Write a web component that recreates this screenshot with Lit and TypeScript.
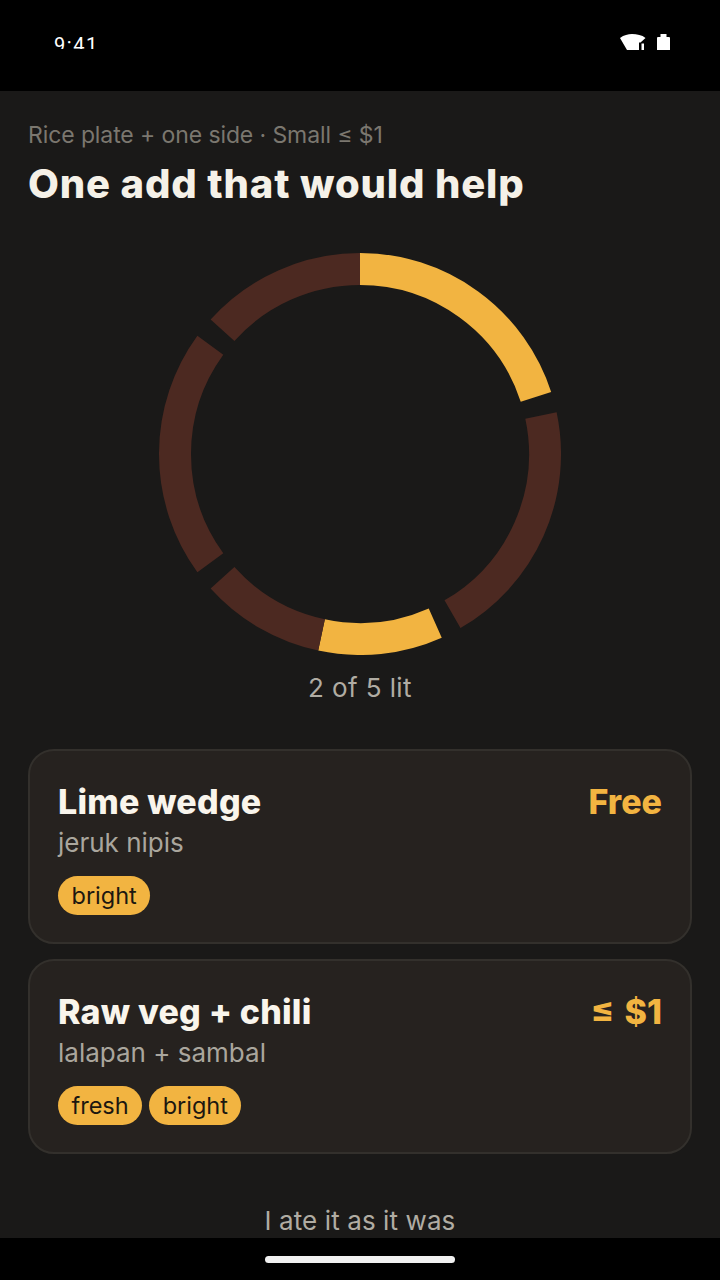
import { LitElement, html, css, svg } from "lit";
import { customElement } from "lit/decorators.js";

const R = 185;
const arc = (a: number, b: number) => {
  const p = (d: number) => {
    const t = (d * Math.PI) / 180;
    return `${(201 + R * Math.sin(t)).toFixed(2)} ${(201 - R * Math.cos(t)).toFixed(2)}`;
  };
  return `M${p(a)} A${R} ${R} 0 ${b - a > 180 ? 1 : 0} 1 ${p(b)}`;
};
const SEGS: [number, number, boolean][] = [
  [0, 72, true], [78, 150, false], [156, 192, true], [192, 228, false], [234, 306, false], [312, 360, false],
];

@customElement("app-root")
export class AppRoot extends LitElement {
  static styles = css`
    :host { display: block; width: 720px; height: 1280px; overflow: hidden; background: #000; font-family: "Inter", "Lato", sans-serif; }
    .screen { height: 1280px; display: flex; flex-direction: column; }
    .status { height: 91px; flex: none; background: #000; display: flex; justify-content: space-between; align-items: flex-start; padding: 0 50px 0 54px; box-sizing: border-box; }
    .clock { margin-top: 33px; height: 16px; overflow: hidden; color: #fff; font: 400 20px/24px "Roboto", sans-serif; letter-spacing: 1.6px; }
    .icons { margin-top: 34px; display: flex; gap: 11px; }
    .icons svg { display: block; }
    .main { flex: 1; min-height: 0; overflow: hidden; background: #1a1918; padding: 29px 28px 0; box-sizing: border-box; }
    .sub { font-size: 23px; line-height: 30px; color: #7b776f; letter-spacing: -0.1px; }
    h1 { margin: 9px 0 0; font-size: 40px; line-height: 50px; font-weight: 800; color: #f5f1e8; letter-spacing: 0.86px; }
    .ring { display: flex; justify-content: center; margin-top: 44px; }
    .ring svg { display: block; }
    .lit { margin-top: 15px; text-align: center; font-size: 26px; line-height: 36px; color: #b0aca3; letter-spacing: 0.4px; }
    .cards { margin-top: 43px; display: flex; flex-direction: column; gap: 15px; }
    .card { height: 195px; box-sizing: border-box; border: 2px solid #33302c; border-radius: 26px; background: #26221f; padding: 28px 28px 0; }
    .top { display: flex; justify-content: space-between; align-items: center; height: 46px; }
    .name { font-size: 34px; font-weight: 800; color: #f9f5ec; line-height: 46px; letter-spacing: 0.2px; }
    .price { font-size: 34px; font-weight: 800; color: #f2b441; line-height: 46px; word-spacing: 3px; }
    .local { font-size: 26px; line-height: 36px; color: #aaa69d; }
    .tags { display: flex; gap: 7px; margin-top: 15px; }
    .tag { height: 39px; padding: 0 13.5px; border-radius: 20px; background: #f2b441; color: #1c1710; font-size: 23.5px; line-height: 39px; }
    .skip { margin-top: 49px; text-align: center; font-size: 26px; line-height: 36px; color: #b0aca3; letter-spacing: 0.1px; }
    .nav { height: 42px; flex: none; background: #000; display: flex; justify-content: center; align-items: flex-start; padding-top: 18px; box-sizing: border-box; }
    .pill { width: 190px; height: 7px; border-radius: 4px; background: #f1f1f1; }
  `;

  private card(name: string, price: string, local: string, tags: string[]) {
    return html`<div class="card">
      <div class="top"><span class="name">${name}</span><span class="price">${price}</span></div>
      <div class="local">${local}</div>
      <div class="tags">${tags.map((t) => html`<span class="tag">${t}</span>`)}</div>
    </div>`;
  }

  render() {
    return html`<div class="screen">
      <div class="status">
        <div class="clock">9:41</div>
        <div class="icons">
          <svg width="26" height="16" viewBox="0 0 26 16" fill="#fff">
            <path d="M0 4 C4 1 8 0 12 0 C17 0 22 1 25.5 4 L20.5 8.5 H19 V16 H7 Z"/>
            <path d="M21.5 9.5 h2.5 v6.5 h-2.5 z"/>
          </svg>
          <svg width="13" height="16" viewBox="0 0 13 16" fill="#fff">
            <path d="M3.5 0 h6 v3 H12 a1 1 0 0 1 1 1 V16 H0 V4 a1 1 0 0 1 1 -1 H3.5 Z"/>
          </svg>
        </div>
      </div>
      <div class="main">
        <div class="sub">Rice plate + one side · Small ≤ $1</div>
        <h1>One add that would help</h1>
        <div class="ring">
          <svg width="402" height="402" viewBox="0 0 402 402" fill="none" stroke-width="32">
            ${SEGS.map(([a, b, on]) => svg`<path d=${arc(a, b)} stroke=${on ? "#f2b441" : "#4c2921"}/>`)}
          </svg>
        </div>
        <div class="lit">2 of 5 lit</div>
        <div class="cards">
          ${this.card("Lime wedge", "Free", "jeruk nipis", ["bright"])}
          ${this.card("Raw veg + chili", "≤ $1", "lalapan + sambal", ["fresh", "bright"])}
        </div>
        <div class="skip">I ate it as it was</div>
      </div>
      <div class="nav"><div class="pill"></div></div>
    </div>`;
  }
}
